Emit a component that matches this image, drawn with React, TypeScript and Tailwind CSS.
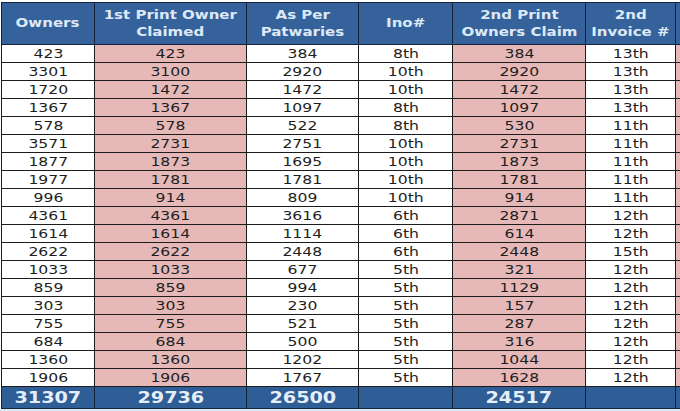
const rows: string[][] = [
  ["423", "423", "384", "8th", "384", "13th"],
  ["3301", "3100", "2920", "10th", "2920", "13th"],
  ["1720", "1472", "1472", "10th", "1472", "13th"],
  ["1367", "1367", "1097", "8th", "1097", "13th"],
  ["578", "578", "522", "8th", "530", "11th"],
  ["3571", "2731", "2751", "10th", "2731", "11th"],
  ["1877", "1873", "1695", "10th", "1873", "11th"],
  ["1977", "1781", "1781", "10th", "1781", "11th"],
  ["996", "914", "809", "10th", "914", "11th"],
  ["4361", "4361", "3616", "6th", "2871", "12th"],
  ["1614", "1614", "1114", "6th", "614", "12th"],
  ["2622", "2622", "2448", "6th", "2448", "15th"],
  ["1033", "1033", "677", "5th", "321", "12th"],
  ["859", "859", "994", "5th", "1129", "12th"],
  ["303", "303", "230", "5th", "157", "12th"],
  ["755", "755", "521", "5th", "287", "12th"],
  ["684", "684", "500", "5th", "316", "12th"],
  ["1360", "1360", "1202", "5th", "1044", "12th"],
  ["1906", "1906", "1767", "5th", "1628", "12th"],
];

const headers: string[][] = [
  ["Owners"],
  ["1st Print Owner", "Claimed"],
  ["As Per", "Patwaries"],
  ["Ino#"],
  ["2nd Print", "Owners Claim"],
  ["2nd", "Invoice #"],
  [""],
];

const totals = ["31307", "29736", "26500", "", "24517", "", ""];

// pink columns: 1st print claim, 2nd print claim, and the cut-off last one
const pink = [false, true, false, false, true, false, true];

export default function App() {
  return (
    <div
      className="w-[680px] h-[411px] overflow-hidden bg-[#dbe8f5]"
      style={{ fontFamily: '"DejaVu Sans", Verdana, sans-serif' }}
    >
      <div className="pt-[2px] pl-px bg-white">
        <table className="table-fixed border-collapse w-[740px]">
          <colgroup>
            <col className="w-[93px]" />
            <col className="w-[152px]" />
            <col className="w-[112px]" />
            <col className="w-[94px]" />
            <col className="w-[133px]" />
            <col className="w-[90px]" />
            <col className="w-[66px]" />
          </colgroup>
          <thead>
            <tr className="h-[42px] bg-[#35629b]">
              {headers.map((h, i) => (
                <th
                  key={i}
                  className="border border-[#14233a] text-center align-middle font-bold text-[12px] leading-[17px] text-[#dde9f6] p-0"
                >
                  {h.map((line, j) => (
                    <div key={j}>
                      <span className="inline-block scale-x-125 whitespace-nowrap">{line}</span>
                    </div>
                  ))}
                </th>
              ))}
            </tr>
          </thead>
          <tbody>
            {rows.map((r, i) => (
              <tr key={i} className="h-[18px]">
                {[...r, ""].map((c, j) => (
                  <td
                    key={j}
                    className={`border border-[#1c1c1c] text-center text-[12px] leading-[16px] text-[#1e1e1e] p-0 ${
                      pink[j] ? "bg-[#e6b9b8]" : "bg-white"
                    }`}
                  >
                    <span className="inline-block scale-x-130">{c}</span>
                  </td>
                ))}
              </tr>
            ))}
            <tr className="h-[22px] bg-[#2f5d96]">
              {totals.map((t, i) => (
                <td
                  key={i}
                  className="border border-[#14233a] text-center font-bold text-[16px] leading-[20px] text-[#e4eef9] p-0"
                >
                  <span className="inline-block scale-x-120">{t}</span>
                </td>
              ))}
            </tr>
          </tbody>
        </table>
      </div>
    </div>
  );
}
